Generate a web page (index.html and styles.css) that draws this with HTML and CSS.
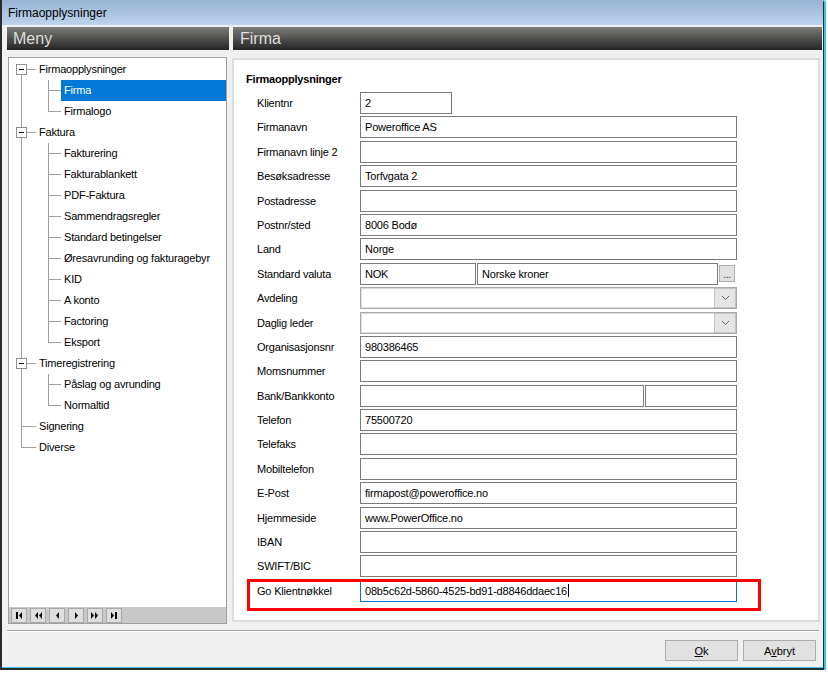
FILE: index.html
```html
<!DOCTYPE html>
<html lang="no">
<head>
    <meta charset="UTF-8">
    <title>Firmaopplysninger</title>
    <link rel="stylesheet" href="styles.css">
</head>
<body>
    <div class="window">
        <div class="titlebar">Firmaopplysninger</div>

        <div class="main">
            <!-- Menytre til venstre -->
            <div class="menu-col">
                <div class="pane-header">Meny</div>
                <div class="tree-box">
                    <div class="tree">
                        <div class="node root first"><span class="twisty"></span><span class="lbl">Firmaopplysninger</span></div>
                        <div class="node child"><span class="lbl selected">Firma</span></div>
                        <div class="node child end"><span class="lbl">Firmalogo</span></div>
                        <div class="node root"><span class="twisty"></span><span class="lbl">Faktura</span></div>
                        <div class="node child"><span class="lbl">Fakturering</span></div>
                        <div class="node child"><span class="lbl">Fakturablankett</span></div>
                        <div class="node child"><span class="lbl">PDF-Faktura</span></div>
                        <div class="node child"><span class="lbl">Sammendragsregler</span></div>
                        <div class="node child"><span class="lbl">Standard betingelser</span></div>
                        <div class="node child"><span class="lbl">Øresavrunding og fakturagebyr</span></div>
                        <div class="node child"><span class="lbl">KID</span></div>
                        <div class="node child"><span class="lbl">A konto</span></div>
                        <div class="node child"><span class="lbl">Factoring</span></div>
                        <div class="node child end"><span class="lbl">Eksport</span></div>
                        <div class="node root"><span class="twisty"></span><span class="lbl">Timeregistrering</span></div>
                        <div class="node child"><span class="lbl">Påslag og avrunding</span></div>
                        <div class="node child end"><span class="lbl">Normaltid</span></div>
                        <div class="node root"><span class="twisty none"></span><span class="lbl">Signering</span></div>
                        <div class="node root last"><span class="twisty none"></span><span class="lbl">Diverse</span></div>
                    </div>
                    <div class="nav-bar">
                        <span class="nav-btn"><svg width="14" height="13" viewBox="0 0 14 13"><rect x="4" y="3" width="2" height="7"/><path d="M10 3v7L7 6.5z"/></svg></span>
                        <span class="nav-btn"><svg width="14" height="13" viewBox="0 0 14 13"><path d="M7 3v7L4 6.5zM11 3v7L8 6.5z"/></svg></span>
                        <span class="nav-btn"><svg width="14" height="13" viewBox="0 0 14 13"><path d="M9 3v7L6 6.5z"/></svg></span>
                        <span class="nav-btn"><svg width="14" height="13" viewBox="0 0 14 13"><path d="M6 3v7l3-3.5z"/></svg></span>
                        <span class="nav-btn"><svg width="14" height="13" viewBox="0 0 14 13"><path d="M3 3v7l3-3.5zM7 3v7l3-3.5z"/></svg></span>
                        <span class="nav-btn"><svg width="14" height="13" viewBox="0 0 14 13"><path d="M4 3v7l3-3.5z"/><rect x="8" y="3" width="2" height="7"/></svg></span>
                    </div>
                </div>
            </div>

            <!-- Skjema for valgt side -->
            <div class="content-col">
                <div class="pane-header">Firma</div>
                <div class="panel">
                    <div class="section-title">Firmaopplysninger</div>
                    <div class="form">
                        <div class="row"><label>Klientnr</label><div class="field w-short">2</div></div>
                        <div class="row"><label>Firmanavn</label><div class="field w-full">Poweroffice AS</div></div>
                        <div class="row"><label>Firmanavn linje 2</label><div class="field w-full"></div></div>
                        <div class="row"><label>Besøksadresse</label><div class="field w-full">Torfvgata 2</div></div>
                        <div class="row"><label>Postadresse</label><div class="field w-full"></div></div>
                        <div class="row"><label>Postnr/sted</label><div class="field w-full">8006 Bodø</div></div>
                        <div class="row"><label>Land</label><div class="field w-full">Norge</div></div>
                        <div class="row">
                            <label>Standard valuta</label>
                            <div class="field w-code">NOK</div>
                            <div class="field w-name">Norske kroner</div>
                            <span class="dots-btn">...</span>
                        </div>
                        <div class="row">
                            <label>Avdeling</label>
                            <div class="combo"><span class="drop"><svg width="9" height="6" viewBox="0 0 9 6"><path d="M1 1l3.5 3.5L8 1" fill="none" stroke="#606060"/></svg></span></div>
                        </div>
                        <div class="row">
                            <label>Daglig leder</label>
                            <div class="combo"><span class="drop"><svg width="9" height="6" viewBox="0 0 9 6"><path d="M1 1l3.5 3.5L8 1" fill="none" stroke="#606060"/></svg></span></div>
                        </div>
                        <div class="row"><label>Organisasjonsnr</label><div class="field w-full">980386465</div></div>
                        <div class="row"><label>Momsnummer</label><div class="field w-full"></div></div>
                        <div class="row">
                            <label>Bank/Bankkonto</label>
                            <div class="field w-bank"></div>
                            <div class="field w-acct"></div>
                        </div>
                        <div class="row"><label>Telefon</label><div class="field w-full">75500720</div></div>
                        <div class="row"><label>Telefaks</label><div class="field w-full"></div></div>
                        <div class="row"><label>Mobiltelefon</label><div class="field w-full"></div></div>
                        <div class="row"><label>E-Post</label><div class="field w-full">firmapost@poweroffice.no</div></div>
                        <div class="row"><label>Hjemmeside</label><div class="field w-full">www.PowerOffice.no</div></div>
                        <div class="row"><label>IBAN</label><div class="field w-full"></div></div>
                        <div class="row"><label>SWIFT/BIC</label><div class="field w-full"></div></div>
                        <div class="row marked">
                            <label>Go Klientnøkkel</label>
                            <div class="field w-full focused">08b5c62d-5860-4525-bd91-d8846ddaec16<span class="caret"></span></div>
                            <span class="mark-box"></span>
                        </div>
                    </div>
                </div>
            </div>
        </div>

        <div class="separator"></div>
        <div class="actions">
            <button><u>O</u>k</button>
            <button>A<u>v</u>bryt</button>
        </div>
    </div>
</body>
</html>
```

FILE: styles.css
```css
body {
    margin: 0;
    background: #fff;
    font-family: "Liberation Sans", Arial, sans-serif;
    font-size: 11px;
    letter-spacing: -0.2px;
    color: #000;
}

.window {
    width: 821px;
    height: 668px;
    display: flex;
    flex-direction: column;
    background: #f0f0f0;
    border-left: 2px solid #2b2b2b;
    border-right: 1px solid #2b2b2b;
    border-bottom: 2px solid #2b2b2b;
    border-top-right-radius: 3px;
    box-shadow: 2px 0 0 #3bc3ec, inset 0 -1px 0 #3bc3ec;
}

.titlebar {
    height: 25px;
    line-height: 27px;
    padding-left: 6px;
    font-size: 12px;
    letter-spacing: 0;
    background: linear-gradient(#99b4d2, #bcd3eb);
}

.main {
    display: flex;
    gap: 3px;
    height: 598px;
    margin-top: 2px;
    padding-left: 5px;
}

.menu-col {
    width: 222px;
    display: flex;
    flex-direction: column;
}

.content-col {
    flex: 1;
    display: flex;
    flex-direction: column;
}

.pane-header {
    height: 23px;
    line-height: 23px;
    padding-left: 6px;
    font-size: 16px;
    letter-spacing: 0;
    color: #dedede;
    background: linear-gradient(#7c7c79, #242424);
}

.content-col .pane-header {
    margin: 0 1px;
    padding-left: 7px;
}

/* tre */
.tree-box {
    flex: 1;
    margin: 7px 2px 1px 1px;
    border: 1px solid #a0a0a0;
    background: #fff;
    display: flex;
    flex-direction: column;
}

.tree {
    flex: 1;
    padding-top: 1px;
}

.node {
    height: 21px;
    display: flex;
    align-items: center;
    white-space: nowrap;
}

.node.root {
    padding-left: 7px;
    background:
        linear-gradient(#a0a0a0, #a0a0a0) 12px 0 / 1px 100% no-repeat,
        linear-gradient(#a0a0a0, #a0a0a0) 12px 10px / 15px 1px no-repeat;
}

.node.root.first {
    background:
        linear-gradient(#a0a0a0, #a0a0a0) 12px 10px / 1px 11px no-repeat,
        linear-gradient(#a0a0a0, #a0a0a0) 12px 10px / 15px 1px no-repeat;
}

.node.root.last {
    background:
        linear-gradient(#a0a0a0, #a0a0a0) 12px 0 / 1px 11px no-repeat,
        linear-gradient(#a0a0a0, #a0a0a0) 12px 10px / 15px 1px no-repeat;
}

.node.child {
    padding-left: 52px;
    background:
        linear-gradient(#a0a0a0, #a0a0a0) 12px 0 / 1px 100% no-repeat,
        linear-gradient(#a0a0a0, #a0a0a0) 39px 0 / 1px 100% no-repeat,
        linear-gradient(#a0a0a0, #a0a0a0) 39px 10px / 13px 1px no-repeat;
}

.node.child.end {
    background:
        linear-gradient(#a0a0a0, #a0a0a0) 12px 0 / 1px 100% no-repeat,
        linear-gradient(#a0a0a0, #a0a0a0) 39px 0 / 1px 11px no-repeat,
        linear-gradient(#a0a0a0, #a0a0a0) 39px 10px / 13px 1px no-repeat;
}

.twisty {
    width: 9px;
    height: 9px;
    margin-right: 9px;
    border: 1px solid #8f8f8f;
    background: #fff;
}

.twisty::before {
    content: "";
    display: block;
    width: 5px;
    height: 1px;
    margin: 4px auto 0;
    background: #000;
}

.twisty.none {
    border-color: transparent;
    background: transparent;
}

.twisty.none::before {
    display: none;
}

.lbl {
    padding: 0 3px;
    line-height: 21px;
}

.lbl.selected {
    flex: 1;
    background: #0078d7;
    color: #fff;
}

.nav-bar {
    height: 16px;
    box-sizing: border-box;
    display: flex;
    gap: 3px;
    padding: 1px 0 0 2px;
    background: #c8c8c8;
}

.nav-btn {
    width: 16px;
    height: 15px;
    box-sizing: border-box;
    border: 1px solid #a9a9a9;
    background: #dedede;
    display: flex;
    align-items: center;
    justify-content: center;
}

/* skjema */
.panel {
    flex: 1;
    margin: 8px 3px 3px 0;
    padding: 12px 0 0 12px;
    background: #fff;
    border: 2px solid #dcdcdc;
}

.section-title {
    font-weight: bold;
    line-height: 14px;
}

.form {
    margin-top: 6px;
    padding-left: 11px;
}

.row {
    position: relative;
    display: flex;
    align-items: center;
    height: 22px;
    margin-bottom: 2.4px;
}

.row label {
    width: 103px;
}

.field {
    height: 22px;
    box-sizing: border-box;
    padding-left: 4px;
    line-height: 20px;
    white-space: nowrap;
    border: 1px solid #7a7a7a;
    background: #fff;
}

.w-full { width: 377px; }
.w-short { width: 92px; }
.w-code { width: 116px; margin-right: 1px; }
.w-name { width: 241px; }
.w-bank { width: 284px; margin-right: 1px; }
.w-acct { width: 92px; }

.dots-btn {
    width: 16px;
    height: 17px;
    box-sizing: border-box;
    margin-left: 1px;
    border: 1px solid #adadad;
    background: #e1e1e1;
    font-size: 10px;
    line-height: 17px;
    text-align: center;
    color: #333;
}

.combo {
    width: 377px;
    height: 22px;
    box-sizing: border-box;
    display: flex;
    justify-content: flex-end;
    border: 1px solid #a9a9a9;
    box-shadow: inset 0 0 0 1px #dcdcdc;
    background: #fff;
}

.drop {
    width: 20px;
    display: flex;
    align-items: center;
    justify-content: center;
    background: #e5e5e5;
    border: 1px solid #c4c4c4;
}

.field.focused {
    border-color: #0078d7;
}

.caret {
    display: inline-block;
    width: 1px;
    height: 13px;
    margin-left: 1px;
    vertical-align: -2px;
    background: #000;
}

.mark-box {
    position: absolute;
    left: -10px;
    top: -1px;
    width: 514px;
    height: 32px;
    box-sizing: border-box;
    border: 3px solid #ff0000;
}

.separator {
    margin: 5px 4px 0 5px;
    border-top: 1px solid #a0a0a0;
    border-bottom: 1px solid #fff;
}

.actions {
    display: flex;
    justify-content: flex-end;
    gap: 5px;
    padding: 8px 7px 0 0;
}

.actions button {
    width: 73px;
    height: 21px;
    padding: 0;
    border: 1px solid #adadad;
    background: #e1e1e1;
    font: inherit;
    color: #000;
}
```
